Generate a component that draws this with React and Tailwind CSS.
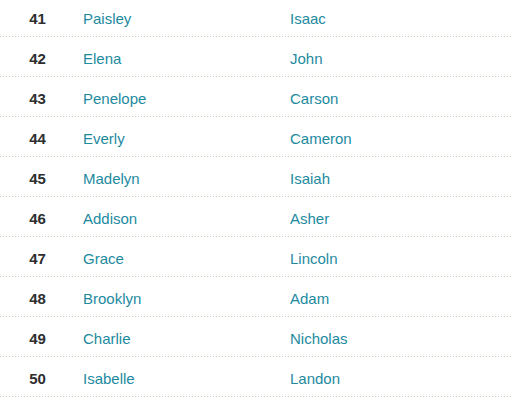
import React from "react";

const rows = [
  [41, "Paisley", "Isaac"],
  [42, "Elena", "John"],
  [43, "Penelope", "Carson"],
  [44, "Everly", "Cameron"],
  [45, "Madelyn", "Isaiah"],
  [46, "Addison", "Asher"],
  [47, "Grace", "Lincoln"],
  [48, "Brooklyn", "Adam"],
  [49, "Charlie", "Nicholas"],
  [50, "Isabelle", "Landon"],
];

const dots =
  "bg-[repeating-linear-gradient(to_right,#cdc8bb_0_1px,transparent_1px_3px)] bg-bottom bg-no-repeat bg-[length:100%_1px]";

export default function App() {
  return (
    <div className="w-[514px] h-[405px] overflow-hidden bg-white font-['Liberation_Sans',Arial,sans-serif] text-[15px]">
      <div className="w-[512px] mt-[-3px]">
        {rows.map(([n, g, b]) => (
          <div key={n} className="flex h-10">
            <div className={`w-[75px] flex items-center justify-center pt-[6px] pb-px font-bold text-[#2e2e2e] ${dots}`}>
              {n}
            </div>
            <div className={`w-[207px] flex items-center pl-2 pt-[6px] pb-px text-[#1d8aa0] ${dots}`}>
              {g}
            </div>
            <div className={`flex-1 flex items-center pl-2 pt-[6px] pb-px text-[#1d8aa0] ${dots}`}>
              {b}
            </div>
          </div>
        ))}
      </div>
    </div>
  );
}
